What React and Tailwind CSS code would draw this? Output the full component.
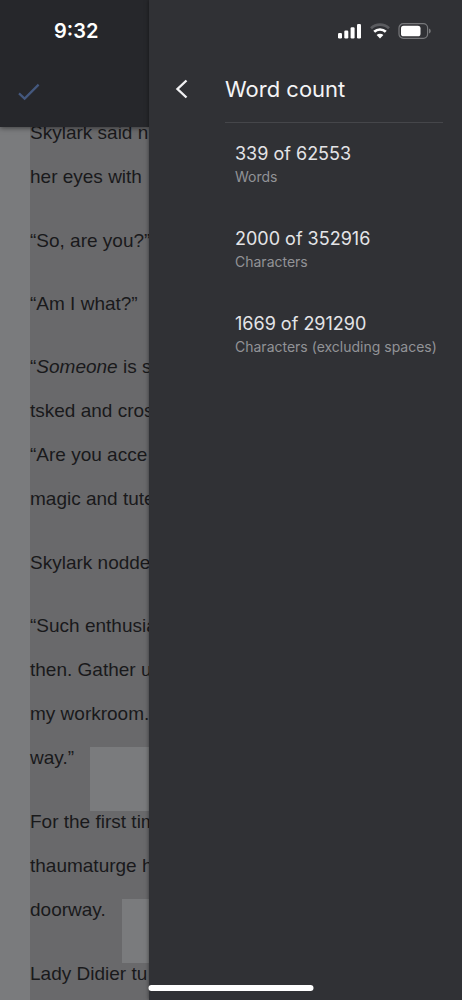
const paragraphs = [
  [["Skylark said n"], ["her eyes with"]],
  [["“So, are you?”"]],
  [["“Am I what?”"]],
  [["“", <em key="e">Someone</em>, " is s"], ["tsked and cros"], ["“Are you acce"], ["magic and tute"]],
  [["Skylark nodde"]],
  [["“Such enthusia"], ["then. Gather u"], ["my workroom."], ["way.”"]],
  [["For the first tim"], ["thaumaturge h"], ["doorway."]],
  [["Lady Didier tu"]],
];

// Width of the selected part of a paragraph's last line, where the selection ends early.
const selectedWidth = { 5: "w-[60px]", 6: "w-[92px]" };

const stats = [
  { value: "339 of 62553", label: "Words" },
  { value: "2000 of 352916", label: "Characters" },
  { value: "1669 of 291290", label: "Characters (excluding spaces)" },
];

function Paragraph({ lines, endWidth }) {
  const lastHeight = lines.length > 1 ? "h-16" : "h-[63px]";
  return (
    <p>
      {lines.map((line, i) => {
        const last = i === lines.length - 1;
        return (
          <span key={i} className={`flex ${last ? lastHeight : "h-11"}`}>
            <span className={`shrink-0 ${last && endWidth ? endWidth : ""}`}>{line}</span>
            {last && endWidth && <span className="flex-1 bg-[#7a7b7d]" />}
          </span>
        );
      })}
    </p>
  );
}

function StatusIcons() {
  return (
    <div className="flex items-center gap-2">
      <svg className="h-4 w-6" viewBox="0 0 24 16" fill="#fff" aria-hidden="true">
        <rect x="0" y="10" width="4" height="5.5" rx="1.2" />
        <rect x="6.3" y="7.5" width="4" height="8" rx="1.2" />
        <rect x="12.6" y="4.3" width="4" height="11.2" rx="1.2" />
        <rect x="19" y="1" width="4" height="14.5" rx="1.2" />
      </svg>
      <svg className="h-4 w-5" viewBox="0 0 20 16" fill="none" strokeWidth="2.7" aria-hidden="true">
        <path d="M1 5.2a13 13 0 0 1 18 0" stroke="#5b5c60" />
        <path d="M4.200 8.800a8.400 8.400 0 0 1 11.600 0" stroke="#fff" />
        <path d="M10 15.400 6.600 12.100a4.800 4.800 0 0 1 6.800 0Z" fill="#fff" />
      </svg>
      <svg className="h-4 w-[34px]" viewBox="0 0 34 16" aria-hidden="true">
        <rect x="1" y="0.7" width="28.6" height="14.6" rx="4.3" fill="none" stroke="#77787b" strokeWidth="1.2" />
        <rect x="3" y="2.7" width="19.5" height="10.6" rx="2.6" fill="#fff" />
        <path d="M31 5.5c2.3.8 2.3 4.200 0 5z" fill="#77787b" />
      </svg>
    </div>
  );
}

export default function App() {
  return (
    <div className="relative flex h-screen overflow-hidden bg-[#303135] font-['Inter',sans-serif]">
      <div className="flex w-[149px] shrink-0 flex-col bg-[#7a7b7d]">
        <header className="z-10 h-[127px] shrink-0 bg-[#26272b] shadow-[0_1px_5px_rgba(0,0,0,0.5)]">
          <div className="flex h-[62px] items-center pl-[54px] text-xl font-semibold text-white">9:32</div>
          <div className="flex h-[60px] items-center pl-4">
            <button type="button" aria-label="Done">
              <svg className="h-6 w-6" viewBox="0 0 24 24" fill="none" stroke="#44587e" strokeWidth="2.2">
                <path d="M3 13.400 8.600 18.600 22.600 4.600" />
              </svg>
            </button>
          </div>
        </header>
        <main className="ml-[30px] min-h-0 flex-1 whitespace-nowrap bg-[#69696b] font-['Liberation_Sans',Arial,sans-serif] text-[19px] leading-[22px] text-[#19191b]">
          <div className="-mt-[5px]">
            {paragraphs.map((lines, i) => (
              <Paragraph key={i} lines={lines} endWidth={selectedWidth[i]} />
            ))}
          </div>
        </main>
      </div>

      <aside className="z-20 min-w-0 flex-1 bg-[#303135] shadow-[0_0_4px_rgba(0,0,0,0.5)]">
        <div className="flex h-[62px] items-center justify-end pr-[30px]">
          <StatusIcons />
        </div>
        <div className="flex">
          <div className="w-[76px] shrink-0 pt-[15px] pl-[21px]">
            <button type="button" aria-label="Back" className="block">
              <svg className="h-6 w-6" viewBox="0 0 24 24" fill="none" stroke="#f1f1f3" strokeWidth="2.4">
                <path d="M16.500 3.500 7.500 12 16.500 20.500" />
              </svg>
            </button>
          </div>
          <div className="mr-[19px] min-w-0 flex-1">
            <h1 className="flex h-[61px] items-center border-b border-[#45464a] pb-1.5 text-[22px] text-[#f4f4f6]">
              Word count
            </h1>
            <dl className="flex flex-col gap-[39px] pt-[18px] pl-[10px]">
              {stats.map((s) => (
                <div key={s.label} className="flex flex-col-reverse whitespace-nowrap">
                  <dt className="text-sm leading-5 text-[#929397]">{s.label}</dt>
                  <dd className="text-lg leading-[26px] text-[#e4e4e7]">{s.value}</dd>
                </div>
              ))}
            </dl>
          </div>
        </div>
      </aside>

      <div className="absolute bottom-[9px] left-1/2 z-30 h-1.5 w-[165px] -translate-x-1/2 rounded-full bg-white" />
    </div>
  );
}
